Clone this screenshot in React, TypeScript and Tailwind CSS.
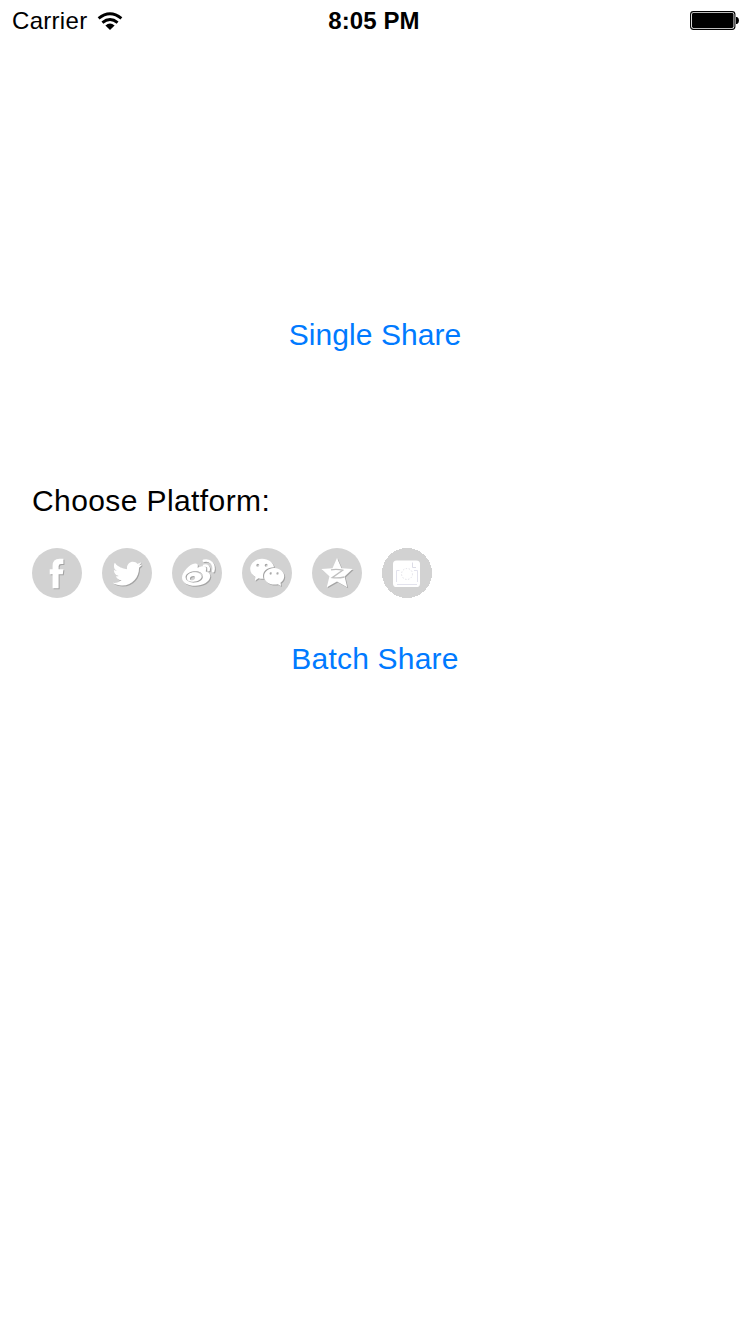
import type { ReactNode } from "react";
import { FaTwitter } from "react-icons/fa";

function Wifi() {
  return (
    <svg className="h-[19px] w-[26px]" viewBox="0 0 26 19" fill="none" stroke="#000" strokeWidth="2.9">
      <path d="M1.6 6.4 Q13 -2.8 24.4 6.4" />
      <path d="M5.4 10.6 Q13 4.4 20.6 10.6" />
      <path d="M8.4 13.4 Q13 9.6 17.6 13.4 L13 18Z" fill="#000" stroke="none" />
    </svg>
  );
}

function Battery() {
  return (
    <svg className="h-5 w-[50px]" viewBox="0 0 50 20">
      <rect x="0.6" y="0.6" width="44.3" height="17.8" rx="2.8" fill="#fff" stroke="#000" strokeWidth="1.1" />
      <rect x="2" y="2" width="41.5" height="15" rx="1.4" />
      <path d="M46 6h1.2Q49 7.4 49 9.5T47.2 13H46z" />
    </svg>
  );
}

function Platform({ label, children }: { label: string; children: ReactNode }) {
  return (
    <button aria-label={label} className="size-[50px] rounded-full bg-[#d2d2d2]">
      <svg className="size-[50px] text-white drop-shadow-[1px_1px_0.5px_rgba(0,0,0,0.22)]" viewBox="0 0 50 50" fill="currentColor">
        {children}
      </svg>
    </button>
  );
}

function Gallery() {
  return (
    <button aria-label="Photos" className="size-[50px]">
      <svg className="size-[50px]" viewBox="0 0 50 50" fill="none">
        <circle cx="25" cy="25" r="25" fill="#d2d2d2" shapeRendering="crispEdges" />
        <rect x="11" y="12.5" width="27" height="26.5" rx="3.6" fill="#fff" />
        <path d="M30.5 14.5V19.5H34" stroke="#dcdce6" />
        <path d="M17.5 22.5H14.5V34M15 36.5H35M35.5 34V22.5H32" stroke="#e3e3ed" />
        <circle cx="25" cy="26" r="5.5" stroke="#e2e2e9" strokeDasharray="1.4 1.6" />
      </svg>
    </button>
  );
}

export default function App() {
  return (
    <main className="flex h-[1334px] w-[750px] flex-col bg-white font-['Liberation_Sans',Arial,sans-serif] text-black">
      <header className="grid h-[42px] grid-cols-3 items-center pl-3 pr-[10px] text-2xl">
        <div className="flex items-center gap-[10px]">
          <span className="tracking-[0.3px]">Carrier</span>
          <Wifi />
        </div>
        <span className="pr-1 text-center font-bold tracking-[0.1px]">8:05 PM</span>
        <div className="flex justify-end">
          <Battery />
        </div>
      </header>

      <button className="mt-[275px] h-9 self-center text-[30px] leading-9 tracking-[0.05px] text-[#007aff]">Single Share</button>

      <section className="mt-[130px] px-8">
        <h1 className="h-9 text-[30px] leading-9 tracking-[0.4px]">Choose Platform:</h1>
        <div className="mt-[29px] flex gap-5">
          <Platform label="Facebook">
            <path d="M31.4 10.8V16H29Q26.6 16 26.6 18.2V21.2H31.4L30.8 26.3H26.6V40.2H20.6V26.3H17.7V21.2H20.6V17.8Q20.6 10.8 27.5 10.8Z" />
          </Platform>
          <Platform label="Twitter">
            <FaTwitter x="10.7" y="11" size="29.3" />
          </Platform>
          <Platform label="Weibo">
            <path fillRule="evenodd" d="M10 29.5C10 24.5 18 15 23.5 15.5C26.5 15.8 26 18 25.5 19.8C29 18.2 34 17.2 34.2 20.5C34.3 21.5 33.8 22.6 33.8 23.4C36.5 24.2 38.5 25.7 38.3 28.3C37.8 34 30.5 37.8 23.2 37.8C16 37.8 10 34.8 10 29.5ZM13.6 29.5C13.9 33 18.5 35.2 23.4 34.6C28.4 34 31.5 31.3 31 27.8C30.5 24.5 26.8 22.7 21.8 23.3C17 24 13.3 26.5 13.6 29.5Z" />
            <path fillRule="evenodd" d="M14.9 29.4C14.9 26.4 18.3 24.3 22.2 24.3S29.7 26.2 29.7 28.6S26 33.8 21.3 33.8S14.9 32 14.9 29.4ZM18 30.7C18.2 32.2 19.8 32.5 21.2 32C22.8 31.4 23.6 29.8 22.9 28.7C22.2 27.6 20.4 27.8 19.3 28.5C18.4 29.1 17.8 29.9 18 30.7Z" />
            <path d="M31.8 12.8C38.2 11.2 43 16.6 41.2 23.2M32 17.6C35.3 16.8 37.3 19 36.6 22.1" fill="none" stroke="currentColor" strokeWidth="2.5" strokeLinecap="round" />
          </Platform>
          <Platform label="WeChat">
            <path fillRule="evenodd" d="M20 10.8C26.4 10.8 31.4 14.6 32 19.3C25.5 19.2 21 23 21 28C21 29 21.2 29.9 21.6 30.8Q19 31 16.4 30.2L12.8 32.8L13.5 28.9C10.2 27 8.2 24.3 8.2 21C8.2 15.2 13.5 10.8 20 10.8ZM15.8 15.8a1.5 1.5 0 1 0 0 3a1.5 1.5 0 1 0 0-3ZM24.2 15.8a1.5 1.5 0 1 0 0 3a1.5 1.5 0 1 0 0-3Z" />
            <path fillRule="evenodd" d="M32.2 20C37.7 20 42.2 23.7 42.2 28.3C42.2 31 40.6 33.3 38.5 34.8L39.1 38L35.8 36.2C28.5 38 22.2 33.8 22.2 28.3C22.2 23.7 26.7 20 32.2 20ZM28.8 24.3a1.2 1.2 0 1 0 0 2.4a1.2 1.2 0 1 0 0-2.4ZM35.6 24.3a1.2 1.2 0 1 0 0 2.4a1.2 1.2 0 1 0 0-2.4Z" />
          </Platform>
          <Platform label="Qzone">
            <path d="M25 10L29.5 20.2L40.6 21L32.6 28.4L35.2 39.2L25 33.6L14.8 39.2L17.4 28.4L9.4 21L20.5 20.2Z" />
            <path d="M19 21.8Q25 20.9 30.6 22.2L20.2 29.6Q26 30.4 32.4 29" fill="none" stroke="#c0c0c0" strokeWidth="1.3" />
          </Platform>
          <Gallery />
        </div>
      </section>

      <button className="mt-[43px] h-9 self-center text-[30px] leading-9 tracking-[0.2px] text-[#007aff]">Batch Share</button>
    </main>
  );
}
